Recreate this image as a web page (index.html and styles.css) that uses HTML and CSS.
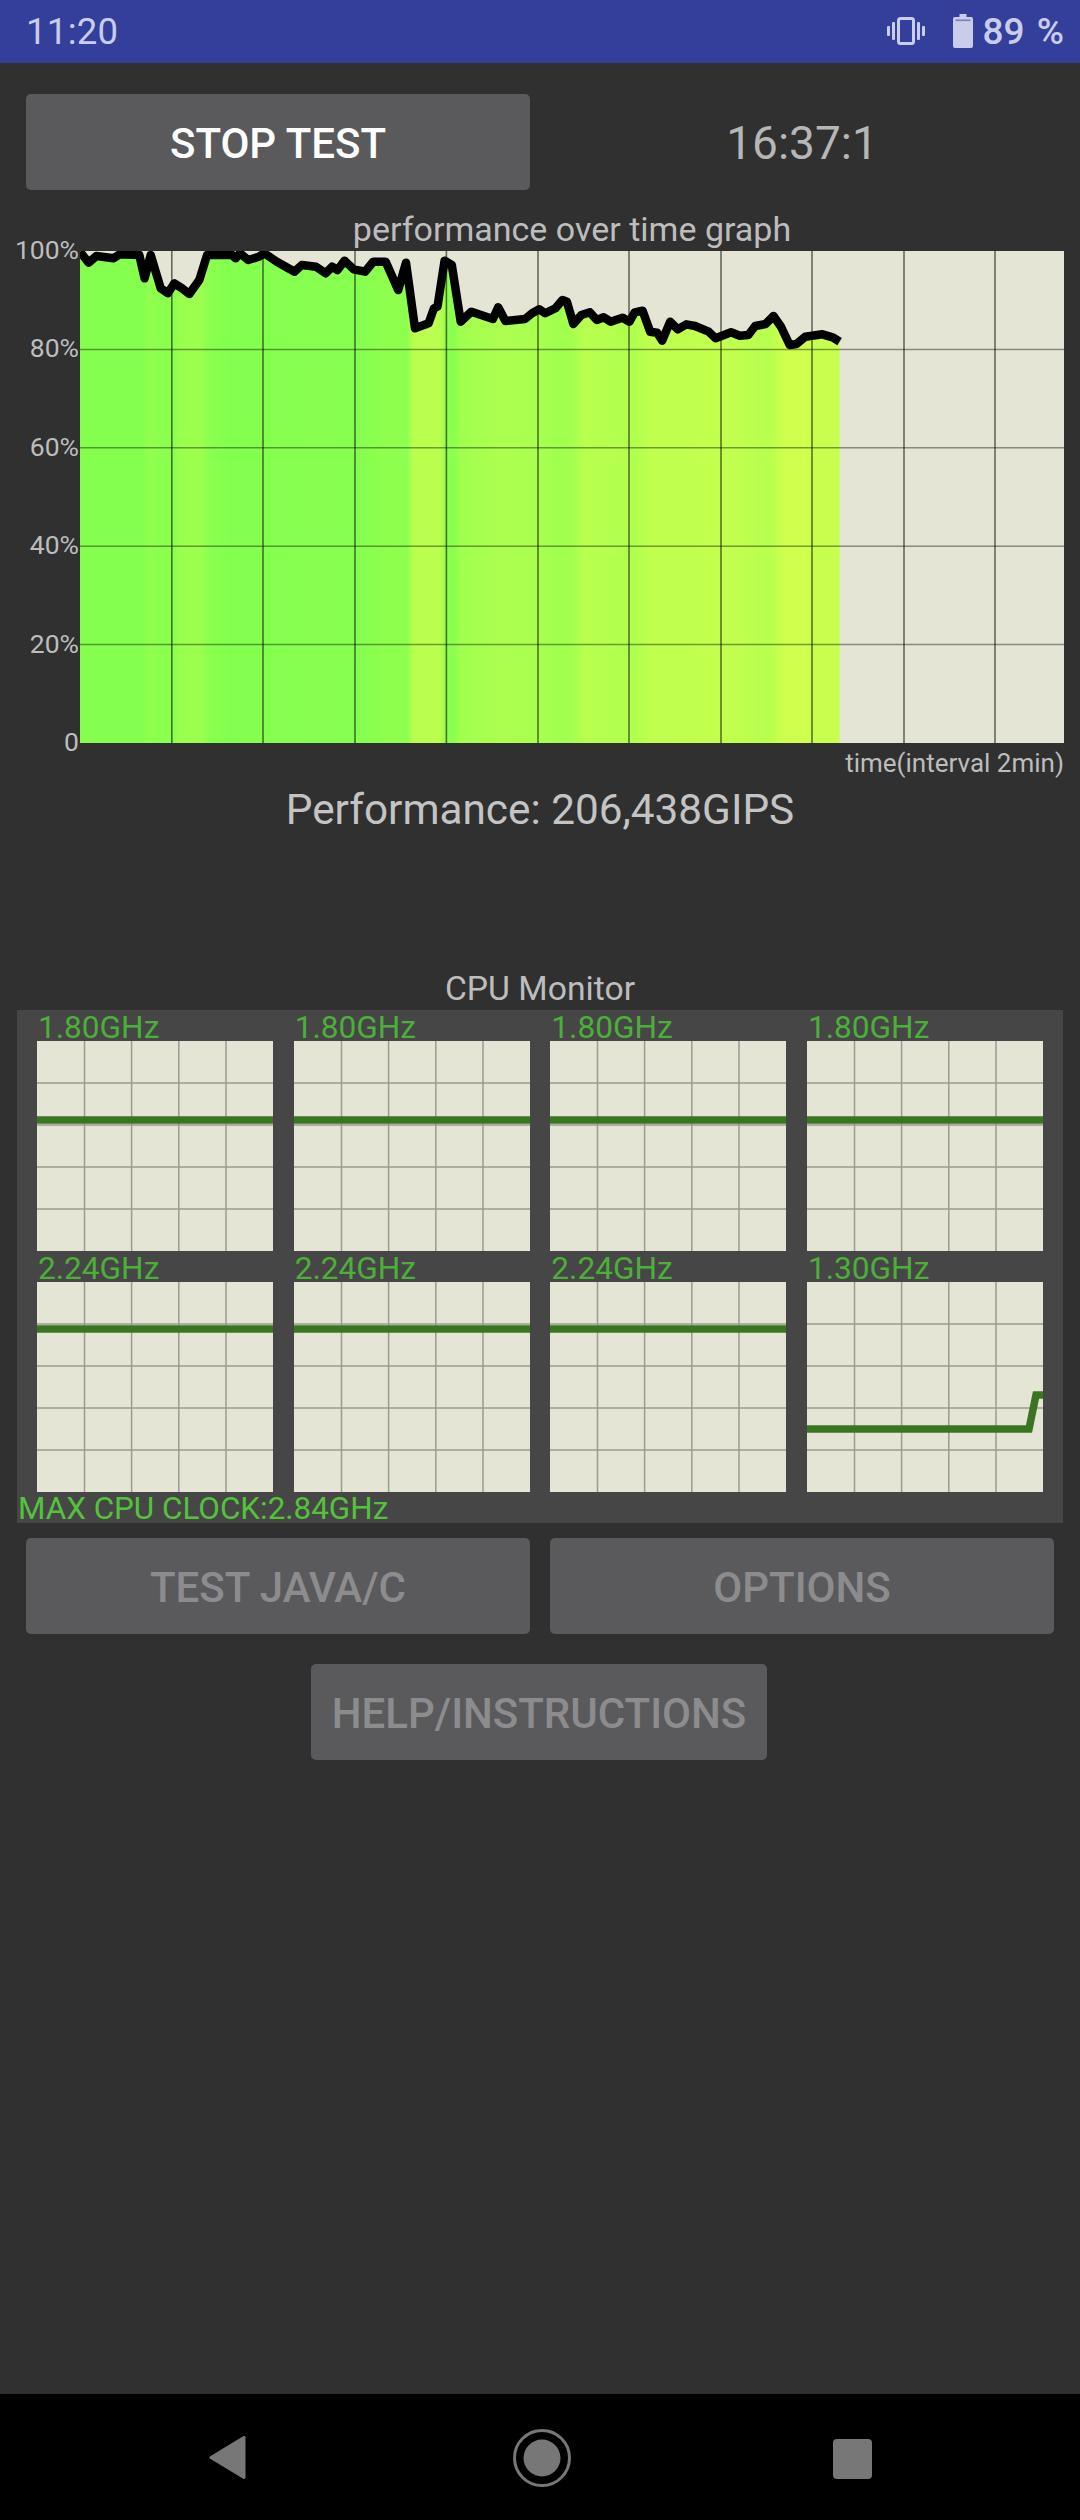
FILE: index.html
```html
<!DOCTYPE html>
<html lang="en">
<head>
<meta charset="utf-8">
<title>CPU Throttling Test</title>
<link rel="stylesheet" href="styles.css">
</head>
<body>
<svg class="defs" width="0" height="0" aria-hidden="true">
  <symbol id="cell-grid" viewBox="0 0 236 210">
    <path d="M47.5 0V210M94.6 0V210M141.8 0V210M189 0V210M0 42H236M0 84H236M0 126H236M0 168H236"/>
  </symbol>
</svg>
<div class="app">
  <header class="status">
    <span class="clock">11:20</span>
    <div class="status-right">
      <svg class="ic-vibrate" viewBox="0 0 38 28" width="38" height="28">
        <rect x="11.5" y="1.5" width="15" height="25" rx="2" fill="none" stroke="currentColor" stroke-width="3"/>
        <rect x="0" y="9" width="3" height="10" rx="1" fill="currentColor"/>
        <rect x="5" y="5" width="3" height="18" rx="1" fill="currentColor"/>
        <rect x="30" y="5" width="3" height="18" rx="1" fill="currentColor"/>
        <rect x="35" y="9" width="3" height="10" rx="1" fill="currentColor"/>
      </svg>
      <svg class="ic-battery" viewBox="0 0 20 34" width="20" height="34">
        <path fill="currentColor" d="M6.5 0h7v3H18a2 2 0 0 1 2 2v27a2 2 0 0 1-2 2H2a2 2 0 0 1-2-2V5a2 2 0 0 1 2-2h4.500z"/>
        <rect x="2.500" y="5.500" width="15" height="1.600" fill="#343f9b" opacity=".55"/>
      </svg>
      <span class="pct">89 %</span>
    </div>
  </header>

  <main class="main">
    <div class="btn-row">
      <div class="btn btn-on">STOP TEST</div>
      <div class="timer">16:37:1</div>
    </div>

    <div class="graph-wrap">
      <div class="graph-title">performance over time graph</div>
      <div class="graph-body">
        <div class="y-axis">
          <span>100%</span><span>80%</span><span>60%</span><span>40%</span><span>20%</span><span>0</span>
        </div>
        <svg class="plot" viewBox="0 0 984 492" width="984" height="492">
          <defs>
            <linearGradient id="heat" gradientUnits="userSpaceOnUse" x1="0" y1="0" x2="984" y2="0">
              <stop offset="0" stop-color="#84ff4e"/>
              <stop offset=".063" stop-color="#84ff4e"/>
              <stop offset=".071" stop-color="#90ff4e"/>
              <stop offset=".086" stop-color="#8aff4e"/>
              <stop offset=".094" stop-color="#8aff4e"/>
              <stop offset=".102" stop-color="#9aff4e"/>
              <stop offset=".122" stop-color="#9cff4e"/>
              <stop offset=".132" stop-color="#8aff4e"/>
              <stop offset=".152" stop-color="#82ff4e"/>
              <stop offset=".203" stop-color="#86ff4e"/>
              <stop offset=".244" stop-color="#88ff4e"/>
              <stop offset=".285" stop-color="#86ff4e"/>
              <stop offset=".315" stop-color="#90ff4e"/>
              <stop offset=".332" stop-color="#8cff4e"/>
              <stop offset=".338" stop-color="#b8ff4e"/>
              <stop offset=".366" stop-color="#bcff4e"/>
              <stop offset=".372" stop-color="#90ff4e"/>
              <stop offset=".380" stop-color="#8aff4e"/>
              <stop offset=".386" stop-color="#a0ff4e"/>
              <stop offset=".396" stop-color="#a4ff4e"/>
              <stop offset=".427" stop-color="#acff4e"/>
              <stop offset=".462" stop-color="#aaff4e"/>
              <stop offset=".486" stop-color="#a0ff4e"/>
              <stop offset=".498" stop-color="#a2ff4e"/>
              <stop offset=".513" stop-color="#b8ff4e"/>
              <stop offset=".549" stop-color="#b4ff4e"/>
              <stop offset=".564" stop-color="#b0ff4e"/>
              <stop offset=".579" stop-color="#c0ff4e"/>
              <stop offset=".610" stop-color="#c0ff4e"/>
              <stop offset=".650" stop-color="#c4ff4e"/>
              <stop offset=".701" stop-color="#b8ff4e"/>
              <stop offset=".717" stop-color="#d0ff4e"/>
              <stop offset=".737" stop-color="#d0ff4e"/>
              <stop offset=".745" stop-color="#c6ff4e"/>
              <stop offset=".772" stop-color="#c8ff4e"/>
            </linearGradient>
          </defs>
          <rect class="plot-bg" width="984" height="492"/>
          <path class="plot-fill" fill="url(#heat)" d="M0 .7L8.600 11.700 16.400 5 33.600 7.300 39.600 3.300 59.300 4 64.600 27.300 70.700 4 80.700 37.300 87.900 42.300 94.300 32.300 102.100 37.300 109.300 43 119.300 29 127.100 4 152.100 4 155.700 7.300 160 2.300 168.200 9 178.900 5.700 184.300 2.300 196.800 10.700 214.600 20.700 221.800 14 236 15.700 245.700 22.300 252.100 15.700 257.500 19 264.600 9.700 273.600 18.300 285 20.700 293.200 10.700 305.700 10.700 318.200 39 326 11.700 335 77.300 348.600 72.300 353.900 57.300 357.500 55.700 364.600 9.700 371.800 14 380.700 70.700 391.400 60.700 412.900 68 418.200 56.300 425.400 70 445 68 452.100 62.300 459.300 58.300 465.200 62.300 475.500 57.300 482.400 49 486.900 50.700 493.400 73 501.300 64 509.900 61.300 516.800 69 523.700 66.300 530.600 70.700 542.600 66.700 549.500 70.700 554.700 61.300 562.600 59.700 570.200 80.700 577.100 81.700 582.200 89.700 590.200 70.700 597.700 78.300 606.300 73.300 615 75 628.700 80.700 635.600 87.300 651.100 81.300 659.700 84.700 668.300 84 675.200 75 685.600 73 693.500 65 701 75.700 709.700 94 716.500 93 725.200 85.700 742.400 83.300 752.700 86.300 759.600 90.700V492H0Z"/>
          <path class="plot-grid-v" d="M91.800 0V492M183 0V492M275 0V492M366.400 0V492M458 0V492M549 0V492M641 0V492M732 0V492M824 0V492M915 0V492"/>
          <path class="plot-grid-h" d="M0 98.400H984M0 196.800H984M0 295.200H984M0 393.600H984"/>
          <path class="plot-line" d="M0 .7L8.600 11.700 16.400 5 33.600 7.300 39.600 3.300 59.300 4 64.600 27.300 70.700 4 80.700 37.300 87.900 42.300 94.300 32.300 102.100 37.300 109.300 43 119.300 29 127.100 4 152.100 4 155.700 7.300 160 2.300 168.200 9 178.900 5.700 184.300 2.300 196.800 10.700 214.600 20.700 221.800 14 236 15.700 245.700 22.300 252.100 15.700 257.500 19 264.600 9.700 273.600 18.300 285 20.700 293.200 10.700 305.700 10.700 318.200 39 326 11.700 335 77.300 348.600 72.300 353.900 57.300 357.500 55.700 364.600 9.700 371.800 14 380.700 70.700 391.400 60.700 412.900 68 418.200 56.300 425.400 70 445 68 452.100 62.300 459.300 58.300 465.200 62.300 475.500 57.300 482.400 49 486.900 50.700 493.400 73 501.300 64 509.900 61.300 516.800 69 523.700 66.300 530.600 70.700 542.600 66.700 549.500 70.700 554.700 61.300 562.600 59.700 570.200 80.700 577.100 81.700 582.200 89.700 590.200 70.700 597.700 78.300 606.300 73.300 615 75 628.700 80.700 635.600 87.300 651.100 81.300 659.700 84.700 668.300 84 675.200 75 685.600 73 693.500 65 701 75.700 709.700 94 716.500 93 725.200 85.700 742.400 83.300 752.700 86.300 759.600 90.700"/>
        </svg>
      </div>
      <div class="time-label">time(interval 2min)</div>
    </div>

    <div class="perf">Performance: 206,438GIPS</div>
    <div class="cpu-title">CPU Monitor</div>

    <section class="cpu-panel">
      <div class="cpu-grid">
        <div class="cpu"><div class="cpu-label">1.80GHz</div><svg class="cpu-chart" viewBox="0 0 236 210" width="236" height="210"><use href="#cell-grid" width="236" height="210"/><path d="M0 79H236"/></svg></div>
        <div class="cpu"><div class="cpu-label">1.80GHz</div><svg class="cpu-chart" viewBox="0 0 236 210" width="236" height="210"><use href="#cell-grid" width="236" height="210"/><path d="M0 79H236"/></svg></div>
        <div class="cpu"><div class="cpu-label">1.80GHz</div><svg class="cpu-chart" viewBox="0 0 236 210" width="236" height="210"><use href="#cell-grid" width="236" height="210"/><path d="M0 79H236"/></svg></div>
        <div class="cpu"><div class="cpu-label">1.80GHz</div><svg class="cpu-chart" viewBox="0 0 236 210" width="236" height="210"><use href="#cell-grid" width="236" height="210"/><path d="M0 79H236"/></svg></div>
        <div class="cpu"><div class="cpu-label">2.24GHz</div><svg class="cpu-chart" viewBox="0 0 236 210" width="236" height="210"><use href="#cell-grid" width="236" height="210"/><path d="M0 47H236"/></svg></div>
        <div class="cpu"><div class="cpu-label">2.24GHz</div><svg class="cpu-chart" viewBox="0 0 236 210" width="236" height="210"><use href="#cell-grid" width="236" height="210"/><path d="M0 47H236"/></svg></div>
        <div class="cpu"><div class="cpu-label">2.24GHz</div><svg class="cpu-chart" viewBox="0 0 236 210" width="236" height="210"><use href="#cell-grid" width="236" height="210"/><path d="M0 47H236"/></svg></div>
        <div class="cpu"><div class="cpu-label">1.30GHz</div><svg class="cpu-chart" viewBox="0 0 236 210" width="236" height="210"><use href="#cell-grid" width="236" height="210"/><path d="M0 147H222L229 113H236"/></svg></div>
      </div>
      <div class="cpu-max">MAX CPU CLOCK:2.84GHz</div>
    </section>

    <div class="btn-row btn-row-lower">
      <div class="btn btn-off">TEST JAVA/C</div>
      <div class="btn btn-off">OPTIONS</div>
    </div>
    <div class="btn btn-off btn-help">HELP/INSTRUCTIONS</div>
  </main>

  <nav class="navbar">
    <svg class="nav-back" viewBox="0 0 37 43" width="37" height="43"><path d="M35 1.500V41.500L2 21.500Z"/></svg>
    <svg class="nav-home" viewBox="0 0 58 58" width="58" height="58"><circle class="ring" cx="29" cy="29" r="27.500"/><circle cx="29" cy="29" r="18.500"/></svg>
    <div class="nav-recent"></div>
  </nav>
</div>
</body>
</html>
```

FILE: styles.css
```css
* { box-sizing: border-box; }

html, body {
  margin: 0;
  padding: 0;
  background: #303030;
}

body {
  font-family: Roboto, "Liberation Sans", sans-serif;
}

.defs { position: absolute; }

#cell-grid path {
  fill: none;
  stroke: #9b9b90;
  stroke-width: 1.5;
}

.app {
  width: 1080px;
  height: 2520px;
  display: flex;
  flex-direction: column;
  overflow: hidden;
}

/* status bar */
.status {
  height: 63px;
  background: #343f9b;
  color: #c9cdeb;
  display: flex;
  align-items: center;
  justify-content: space-between;
  padding: 0 16px 0 26px;
}

.clock {
  font-size: 36.5px;
  line-height: 66px;
  letter-spacing: 0.3px;
}

.status-right {
  display: flex;
  align-items: center;
}

.ic-vibrate { margin-top: -2px; }
.ic-battery { margin: -2px 10px 0 28px; }

.pct {
  font-size: 37px;
  line-height: 66px;
  font-weight: 500;
  word-spacing: 3px;
}

/* main */
.main {
  flex: 1;
  padding-top: 31px;
  display: flex;
  flex-direction: column;
}

.btn-row {
  display: grid;
  grid-template-columns: 504px 504px;
  column-gap: 20px;
  margin: 0 26px;
}

.btn {
  height: 96px;
  padding-top: 2px;
  border-radius: 5px;
  background: #5a5a5c;
  font-size: 42px;
  font-weight: 500;
  display: flex;
  align-items: center;
  justify-content: center;
}

.btn-on { color: #fff; }
.btn-off { color: #8c8c8e; }

.timer {
  padding-top: 2px;
  color: #b6b6b6;
  font-size: 46px;
  display: flex;
  align-items: center;
  justify-content: center;
}

.graph-wrap {
  margin: 19px 16px 0 16px;
}

.graph-title {
  margin-left: 64px;
  height: 42px;
  line-height: 40px;
  text-align: center;
  color: #bdbdbd;
  font-size: 34px;
}

.graph-body {
  display: flex;
}

.y-axis {
  width: 64px;
  height: 524px;
  margin: -17px 0 -15px;
  padding-right: 1px;
  display: flex;
  flex-direction: column;
  justify-content: space-between;
  align-items: flex-end;
  color: #bdbdbd;
  font-size: 26.5px;
  line-height: 32px;
}

.plot {
  display: block;
  flex: none;
}

.plot-bg { fill: #e4e5d5; }

.plot-grid-v {
  fill: none;
  stroke: #000;
  stroke-opacity: .55;
  stroke-width: 1.6;
}

.plot-grid-h {
  fill: none;
  stroke: #000;
  stroke-opacity: .4;
  stroke-width: 1.5;
}

.plot-line {
  fill: none;
  stroke: #000;
  stroke-width: 8.500;
  stroke-linejoin: round;
}

.time-label {
  margin-top: 2px;
  height: 36px;
  line-height: 36px;
  text-align: right;
  color: #bdbdbd;
  font-size: 26px;
}

.perf {
  margin-top: 2px;
  height: 50px;
  line-height: 54px;
  text-align: center;
  color: #c4c4c4;
  font-size: 42.300px;
}

.cpu-title {
  margin-top: 135px;
  height: 40px;
  line-height: 42px;
  text-align: center;
  color: #bdbdbd;
  font-size: 33.700px;
}

/* CPU panel */
.cpu-panel {
  margin: 2px 17px 0;
  height: 513px;
  background: #464646;
}

.cpu-grid {
  display: grid;
  grid-template-columns: repeat(4, 236px);
  column-gap: 20.67px;
  margin-left: 20px;
}

.cpu-label {
  height: 31px;
  line-height: 35px;
  padding-left: 1px;
  color: #4caf3a;
  font-size: 31.600px;
  white-space: nowrap;
}

.cpu-chart {
  display: block;
  background: #e4e5d5;
}

.cpu-chart > path {
  fill: none;
  stroke: #3a7522;
  stroke-width: 7.500;
}

.cpu-max {
  height: 31px;
  line-height: 34px;
  padding-left: 1px;
  color: #55c23c;
  font-size: 31.400px;
  white-space: nowrap;
}

.btn-row-lower { margin-top: 15px; }

.btn-help {
  margin: 30px 0 0 311px;
  width: 456px;
}

/* navigation bar */
.navbar {
  height: 126px;
  background: #000;
  position: relative;
}

.nav-back, .nav-home, .nav-recent { position: absolute; }

.nav-back { left: 209px; top: 42px; fill: #777; }
.nav-back path { stroke: #777; stroke-width: 3; stroke-linejoin: round; }

.nav-home { left: 513px; top: 35px; fill: #777; }
.nav-home .ring { fill: none; stroke: #777; stroke-width: 3; }

.nav-recent {
  left: 833px;
  top: 45px;
  width: 39px;
  height: 40px;
  background: #777;
  border-radius: 4px;
}
```
